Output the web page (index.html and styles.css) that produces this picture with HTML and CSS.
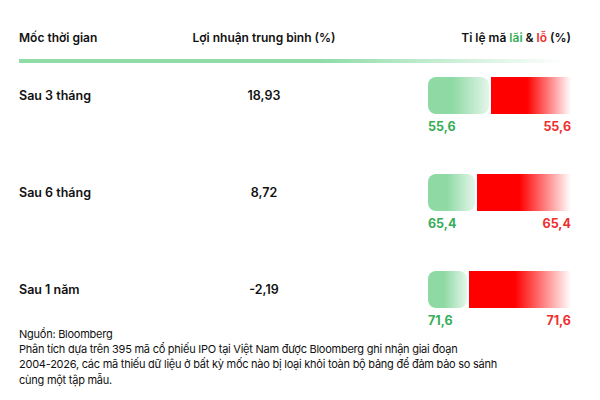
FILE: index.html
```html
<!DOCTYPE html>
<html lang="vi">
<head>
<meta charset="utf-8">
<link rel="stylesheet" href="styles.css">
</head>
<body>
<div class="page">
  <div class="grid head">
    <div class="c1">Mốc thời gian</div>
    <div class="c2">Lợi nhuận trung bình (%)</div>
    <div class="c3">Tỉ lệ mã <span class="g">lãi</span> &amp; <span class="r">lỗ</span> (%)</div>
  </div>
  <div class="rule"></div>
  <div class="rows">
    <div class="grid row">
      <div class="c1 cell">Sau 3 tháng</div>
      <div class="c2 cell">18,93</div>
      <div class="c3 barcell">
        <div class="bars">
          <div class="gbar" style="width:61px"></div>
          <div class="rbar"></div>
        </div>
        <div class="labels"><span class="g">55,6</span><span class="r">55,6</span></div>
      </div>
    </div>
    <div class="grid row">
      <div class="c1 cell">Sau 6 tháng</div>
      <div class="c2 cell">8,72</div>
      <div class="c3 barcell">
        <div class="bars">
          <div class="gbar" style="width:47px"></div>
          <div class="rbar"></div>
        </div>
        <div class="labels"><span class="g">65,4</span><span class="r">65,4</span></div>
      </div>
    </div>
    <div class="grid row">
      <div class="c1 cell">Sau 1 năm</div>
      <div class="c2 cell">-2,19</div>
      <div class="c3 barcell">
        <div class="bars">
          <div class="gbar" style="width:39px"></div>
          <div class="rbar"></div>
        </div>
        <div class="labels"><span class="g">71,6</span><span class="r">71,6</span></div>
      </div>
    </div>
  </div>
  <div class="note">
    <p>Nguồn: Bloomberg</p>
    <p>Phân tích dựa trên 395 mã cổ phiếu IPO tại Việt Nam được Bloomberg ghi nhận giai đoạn <span class="nw">2004-2026,</span> các mã thiếu dữ liệu ở bất kỳ mốc nào bị loại khỏi toàn bộ bảng để đảm bảo so sánh cùng một tập mẫu.</p>
  </div>
</div>
</body>
</html>
```

FILE: styles.css
```css
* { box-sizing: border-box; }
html, body { margin: 0; padding: 0; background: #fff; }
body {
  font-family: Inter, "Noto Sans", sans-serif;
  color: #111;
  width: 600px;
  height: 400px;
  overflow: hidden;
}
.page {
  padding: 29px 29px 0 19px;
}
.grid {
  display: grid;
  grid-template-columns: 170px 150px 1fr;
}
.head {
  font-size: 12px;
  font-weight: 600;
  line-height: 18px;
}
.c2 { text-align: center; }
.c3 { text-align: right; }
.g { color: #36ad58; }
.r { color: #ee2f2f; }
.rule {
  margin-top: 12px;
  height: 4px;
  width: 546px;
  background: linear-gradient(to right, #8fdca7 0%, #8fdca7 55%, rgba(143,220,167,0) 100%);
}
.rows {
  margin-top: 14px;
  display: flex;
  flex-direction: column;
  gap: 40px;
}
.row {
  font-size: 12.5px;
  font-weight: 600;
  height: 57px;
}
.cell {
  line-height: 37px;
  height: 37px;
}
.barcell {
  padding-left: 89px;
  display: flex;
  flex-direction: column;
}
.bars {
  display: flex;
  height: 37px;
  gap: 2px;
}
.gbar {
  border-radius: 8px;
  background: linear-gradient(to right, #8ed9a4 0%, #8ed9a4 40%, #e4f6ea 100%);
}
.rbar {
  flex: 1;
  background: linear-gradient(to right, #ff0000 0%, #ff0000 45%, #ffffff 100%);
}
.labels {
  margin-top: 6px;
  display: flex;
  justify-content: space-between;
  font-size: 12.5px;
  font-weight: 700;
  line-height: 14px;
}
.note {
  margin-top: -1px;
  font-size: 11px;
  letter-spacing: -0.25px;
  line-height: 15.2px;
  max-width: 480px;
  color: #111;
}
.note p { margin: 0; }
.nw { white-space: nowrap; }
```
